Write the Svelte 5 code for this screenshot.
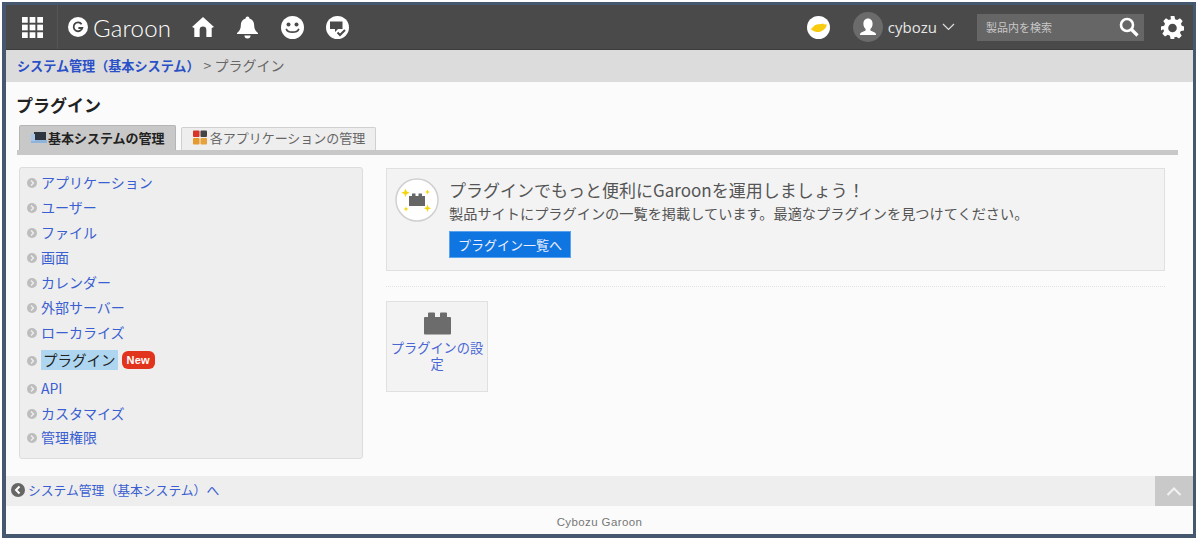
<script>
  const items = ['アプリケーション','ユーザー','ファイル','画面','カレンダー','外部サーバー','ローカライズ','プラグイン','API','カスタマイズ','管理権限'];
</script>

<div class="frame">
  <header class="top">
    <div class="apps">
      <svg width="21" height="21" viewBox="0 0 22 22" fill="#fff">
        {#each [0,8,16] as y}{#each [0,8,16] as x}<rect x={x} y={y} width="6" height="6"/>{/each}{/each}
      </svg>
    </div>
    <div class="logo">
      <svg width="20" height="20" viewBox="0 0 20 20"><circle cx="10" cy="10" r="10" fill="#fff"/><path d="M13.6 7.2A4.4 4.4 0 1 0 14.3 11H10.4" fill="none" stroke="#444" stroke-width="1.8"/></svg>
      <span>Garoon</span>
    </div>
    <svg class="ic home" width="22" height="22" viewBox="0 0 23 23" fill="#fff"><path d="M11.5 1 23 11.5 20.6 12.5V22H15V14.5a3.5 3.5 0 0 0-7 0V22H2.4V12.5L0 11.5Z"/></svg>
    <svg class="ic bell" width="21" height="23" viewBox="0 0 22 23" fill="#fff"><path d="M11 0a2 2 0 0 1 2 2.2c3.4 1 5 3.8 5 7 0 4 1.400 6 4 8v1H0v-1c2.600-2 4-4 4-8 0-3.200 1.600-6 5-7A2 2 0 0 1 11 0Z"/><path d="M7.800 20h6.400a3.200 3 0 0 1-6.400 0Z"/></svg>
    <svg class="ic smile" width="23" height="23" viewBox="0 0 23 23"><circle cx="11.500" cy="11.500" r="11.500" fill="#fff"/><circle cx="7.500" cy="8.500" r="2" fill="#4a4a4a"/><circle cx="15.500" cy="8.500" r="2" fill="#4a4a4a"/><path d="M5.500 13.500c1.500 3.500 10.500 3.500 12 0" fill="none" stroke="#4a4a4a" stroke-width="1.900" stroke-linecap="round"/></svg>
    <svg class="ic chat" width="23" height="23" viewBox="0 0 23 23"><circle cx="11.500" cy="11.500" r="11.500" fill="#fff"/><path d="M4 5.500h12.500v7.500H12L9 16v-3H4Z" fill="#4a4a4a"/><path d="M11.500 16.500l2.500 2.500 5-5" fill="none" stroke="#4a4a4a" stroke-width="2"/></svg>
    <div class="spacer"></div>
    <svg class="lemon" width="23" height="23" viewBox="0 0 23 23"><circle cx="11.500" cy="11.500" r="11.500" fill="#fff"/><path d="M3.500 13c1.500-.3 2.500-2.500 4-3.500 2.500-1.700 6-1 8.500-2 1 .8 2 1.300 3.500.5.300 2-.5 4-2.500 5.500-2 1.600-4.500 3-7.500 2.500-2.500-.4-4-1.500-6-3Z" fill="#f9cb10"/></svg>
    <div class="user">
      <span class="avatar">
        <svg width="30" height="30" viewBox="0 0 30 30"><circle cx="15" cy="15" r="15" fill="#6b6b6b"/><path d="M15 6.500c3 0 4.600 2.300 4.600 5.200 0 2.300-1 4.300-2.200 5.300v1.500c2 1 5 1.500 5.600 3.500v1H7v-1c.6-2 3.600-2.500 5.600-3.500V17c-1.200-1-2.200-3-2.200-5.300 0-2.900 1.600-5.200 4.600-5.200Z" fill="#fff"/></svg>
      </span>
      <span class="uname">cybozu</span>
      <svg width="13" height="8" viewBox="0 0 13 8"><path d="M1 1l5.500 5.500L12 1" fill="none" stroke="#ddd" stroke-width="1.200"/></svg>
    </div>
    <div class="search">
      <span>製品内を検索</span>
      <svg width="20" height="20" viewBox="0 0 20 20"><circle cx="8" cy="8" r="6" fill="none" stroke="#fff" stroke-width="2.600"/><path d="M12.500 12.500 18.500 18.500" stroke="#fff" stroke-width="3.200"/></svg>
    </div>
    <svg class="gear" width="23" height="23" viewBox="0 0 24 24" fill="#fff"><path fill-rule="evenodd" d="M10 0h4l.7 3.300 2.200.9L19.800 2.400l2.800 2.800-1.800 2.900.9 2.200L24 11v4l-3.300.7-.9 1.900 1.800 3-2.800 2.800-2.900-1.800-2.200.9L14 24h-4l-.7-3.500-2.200-.9-2.900 1.800-2.800-2.800 1.800-3-.9-1.900L0 15v-4l3.300-.7.900-2.200-1.800-2.900 2.800-2.800 2.900 1.800 2.200-.9ZM12 8a4.500 4.500 0 1 0 0 9 4.500 4.500 0 0 0 0-9Z"/></svg>
  </header>

  <nav class="crumb"><a href="#a">システム管理（基本システム）</a><span>&gt; プラグイン</span></nav>

  <main class="content">
    <h1>プラグイン</h1>
    <div class="tabs">
      <div class="tab on">
        <svg width="16" height="13" viewBox="0 0 16 13"><rect x="3" y="1" width="12" height="8" fill="#2e3440"/><rect x="0" y="9" width="16" height="3" fill="#8fb4dc"/><rect x="0" y="3" width="4" height="7" fill="#a9c6e6"/></svg>
        基本システムの管理
      </div>
      <div class="tab">
        <svg width="14" height="15" viewBox="0 0 15 15"><rect width="7" height="7" rx="1" fill="#d8352a"/><rect x="8" width="7" height="7" rx="1" fill="#444"/><rect y="8" width="7" height="7" rx="1" fill="#e69a2e"/><rect x="8" y="8" width="7" height="7" rx="1" fill="#e6a23c"/></svg>
        各アプリケーションの管理
      </div>
    </div>
    <div class="rule"></div>

    <div class="cols">
      <ul class="side">
        {#each items as it}
          <li class:cur={it === 'プラグイン'}>
            <svg class="bullet" width="10" height="10" viewBox="0 0 10 10"><circle cx="5" cy="5" r="5" fill="#bdbdbd"/><path d="M4 2.500 6.500 5 4 7.500" fill="none" stroke="#f0f0f0" stroke-width="1.300"/></svg>
            {#if it === 'プラグイン'}
              <span class="sel">{it}</span><span class="new">New</span>
            {:else}
              <a href="#a">{it}</a>
            {/if}
          </li>
        {/each}
      </ul>

      <section class="right">
        <div class="promo">
          <div class="badge">
            <svg width="44" height="44" viewBox="0 0 44 44">
              <circle cx="22" cy="22" r="21" fill="#fff" stroke="#d0d0d0" stroke-width="1.500"/>
              <path d="M14 18h3v-2.500h3.500V18h3v-2.500H27V18h3v10H14Z" fill="#666"/>
              <path d="M10.500 10.500l1.200 3 3 1.200-3 1.200-1.200 3-1.200-3-3-1.200 3-1.200ZM32.500 11.500l.7 1.800 1.800.7-1.800.7-.7 1.800-.7-1.800-1.800-.7 1.800-.7ZM11 28.500l.7 1.800 1.800.7-1.800.7-.7 1.800-.7-1.800-1.800-.7 1.800-.7ZM32.500 26.500l1 2.700 2.700 1-2.700 1-1 2.700-1-2.700-2.700-1 2.700-1Z" fill="#f6d40c"/>
            </svg>
          </div>
          <div class="ptext">
            <div class="ph">プラグインでもっと便利にGaroonを運用しましょう！</div>
            <div class="ps">製品サイトにプラグインの一覧を掲載しています。最適なプラグインを見つけてください。</div>
            <button class="cta">プラグイン一覧へ</button>
          </div>
        </div>
        <div class="dots"></div>
        <a class="card" href="#a">
          <svg width="27" height="23" viewBox="0 0 27 23"><path d="M1 5h3V1.500a1 1 0 0 1 1-1h5a1 1 0 0 1 1 1V5h5V1.500a1 1 0 0 1 1-1h5a1 1 0 0 1 1 1V5h3a1 1 0 0 1 1 1v15.500a1 1 0 0 1-1 1H1a1 1 0 0 1-1-1V6a1 1 0 0 1 1-1Z" fill="#6c6c6c"/></svg>
          <span>プラグインの設定</span>
        </a>
      </section>
    </div>
  </main>

  <div class="back">
    <svg width="14" height="14" viewBox="0 0 14 14"><circle cx="7" cy="7" r="7" fill="#666"/><path d="M8.500 3.500 5 7l3.500 3.500" fill="none" stroke="#fff" stroke-width="2"/></svg>
    <a href="#a">システム管理（基本システム）へ</a>
    <div class="up"><svg width="16" height="10" viewBox="0 0 16 10"><path d="M1.500 9 8 2.500 14.500 9" fill="none" stroke="#f2f2f2" stroke-width="2"/></svg></div>
  </div>
  <footer>Cybozu Garoon</footer>
</div>

<style>
  :global(body) { margin: 0; background: #fff; }
  * { box-sizing: border-box; }
  .frame {
    margin: 2px 4px 0 2px;
    width: 1194px;
    height: 536px;
    border: 3px solid #45586f;
    border-left-width: 4px;
    border-bottom-width: 4px;
    background: #fbfbfb;
    display: flex;
    flex-direction: column;
    overflow: hidden;
    font-family: "Noto Sans CJK JP", "Liberation Sans", sans-serif;
    font-size: 14px;
    color: #333;
  }
  a { color: #3a5fd0; text-decoration: none; }
  .top {
    height: 45px;
    flex: none;
    background: #4a4a4a;
    display: flex;
    align-items: center;
    border-bottom: 1px solid #3c3c3c;
  }
  .apps { width: 52px; height: 100%; display: flex; align-items: center; justify-content: center; border-right: 1px solid #555; padding-left: 1px; }
  .logo { display: flex; align-items: center; gap: 5px; margin-left: 10px; color: #fff; font-size: 24px; width: 119px; }
  .logo span { font-family: "Lato", sans-serif; font-weight: 300; letter-spacing: .2px; }
  .ic { flex: none; }
  .home { margin-left: 5px; }
  .bell { margin-left: 23px; }
  .smile { margin-left: 23px; }
  .chat { margin-left: 22px; }
  .spacer { flex: 1; }
  .lemon { flex: none; }
  .user { display: flex; align-items: center; margin-left: 23px; color: #e6e6e6; font-family: "Open Sans", sans-serif; font-size: 15px; }
  .avatar { display: flex; margin-right: 5px; }
  .uname { margin-right: 5px; }
  .search { margin-left: 22px; width: 167px; height: 27px; background: #666; display: flex; align-items: center; justify-content: space-between; padding: 0 5px 0 9px; color: #c8c8c8; font-size: 11px; }
  .gear { margin: 0 9px 0 17px; flex: none; }
  .crumb { height: 32px; flex: none; background: #dcdcdc; display: flex; align-items: center; padding: 0 0 2px 11px; font-size: 14px; color: #666; }
  .crumb a { font-weight: 700; color: #2a50c8; margin-right: 4px; font-size: 13.1px; }
  .content { flex: 1; padding: 0 15px 0 10px; }
  h1 { margin: 12px 0 0; font-size: 17px; line-height: 21px; font-weight: 700; color: #222; }
  .tabs { display: flex; gap: 5px; margin: 10px 0 0 3px; height: 25px; align-items: flex-end; }
  .tab { height: 23px; padding: 0 10px 4px 11px; border: 1px solid #d0d0d0; border-bottom: 0; background: #eee; border-radius: 2px 2px 0 0; display: flex; align-items: center; gap: 3px; font-size: 13px; color: #666; }
  .tab.on { background: #c8c8c8; color: #222; font-weight: 700; border-color: #b5b5b5; height: 25px; gap: 1px; padding-bottom: 2px; }
  .rule { height: 5px; background: #c8c8c8; margin-left: 1px; }
  .cols { display: flex; margin: 12px 0 0 3px; gap: 23px; }
  .side { list-style: none; margin: 0; padding: 2px 0 6px 7px; width: 344px; height: 292px; flex: none; background: #eee; border: 1px solid #ddd; border-radius: 3px; }
  .side li { height: 24.9px; display: flex; align-items: center; gap: 4px; font-size: 14px; }
  .side li.cur { height: 31px; padding-top: 1px; }
  .bullet { flex: none; margin-top: 2px; }
  .sel { background: #aed6f1; color: #222; padding: 0 2px; height: 20px; line-height: 20px; font-size: 14.5px; }
  .new { background: #e2341d; color: #fff; font-weight: 700; font-size: 11px; font-family: "Liberation Sans", sans-serif; padding: 0 5px; height: 18px; line-height: 18px; border-radius: 6px; letter-spacing: .2px; }
  .right { width: 779px; flex: none; }
  .promo { height: 103px; background: #f3f3f3; border: 1px solid #e0e0e0; padding: 9px 9px 9px 8px; display: flex; gap: 10px; margin-top: 1px; }
  .badge { flex: none; height: 44px; }
  .ph { font-size: 17px; line-height: 22px; color: #555; margin-top: 1px; white-space: nowrap; }
  .ps { font-size: 14.2px; line-height: 18px; color: #555; margin-top: 3px; white-space: nowrap; }
  .cta { display: block; margin-top: 9px; width: 122px; height: 27px; padding: 0; background: #0f75e0; border: 1px solid #5aa2ee; color: #eef; font: inherit; font-size: 13px; }
  .dots { margin-top: 15px; border-top: 1px dotted #e2e2e2; }
  .card { margin-top: 14px; width: 102px; height: 91px; background: #f3f3f3; border: 1px solid #e0e0e0; display: flex; flex-direction: column; align-items: center; padding-top: 10px; text-align: center; font-size: 13.2px; line-height: 16px; color: #4a66d4; }
  .card span { margin-top: 5px; display: block; width: 95px; }
  .back { height: 30px; flex: none; margin-top: auto; background: #eee; display: flex; align-items: center; padding: 0 0 3px 5px; gap: 3px; font-size: 12.8px; position: relative; }
  .up { position: absolute; right: 0; top: 0; width: 38px; height: 30px; background: #c9c9c9; display: flex; align-items: center; justify-content: center; }
  footer { height: 28px; flex: none; display: flex; align-items: center; justify-content: center; font-family: "Liberation Sans", sans-serif; font-size: 11.5px; color: #777; padding-top: 4px; letter-spacing: .4px; }
</style>
